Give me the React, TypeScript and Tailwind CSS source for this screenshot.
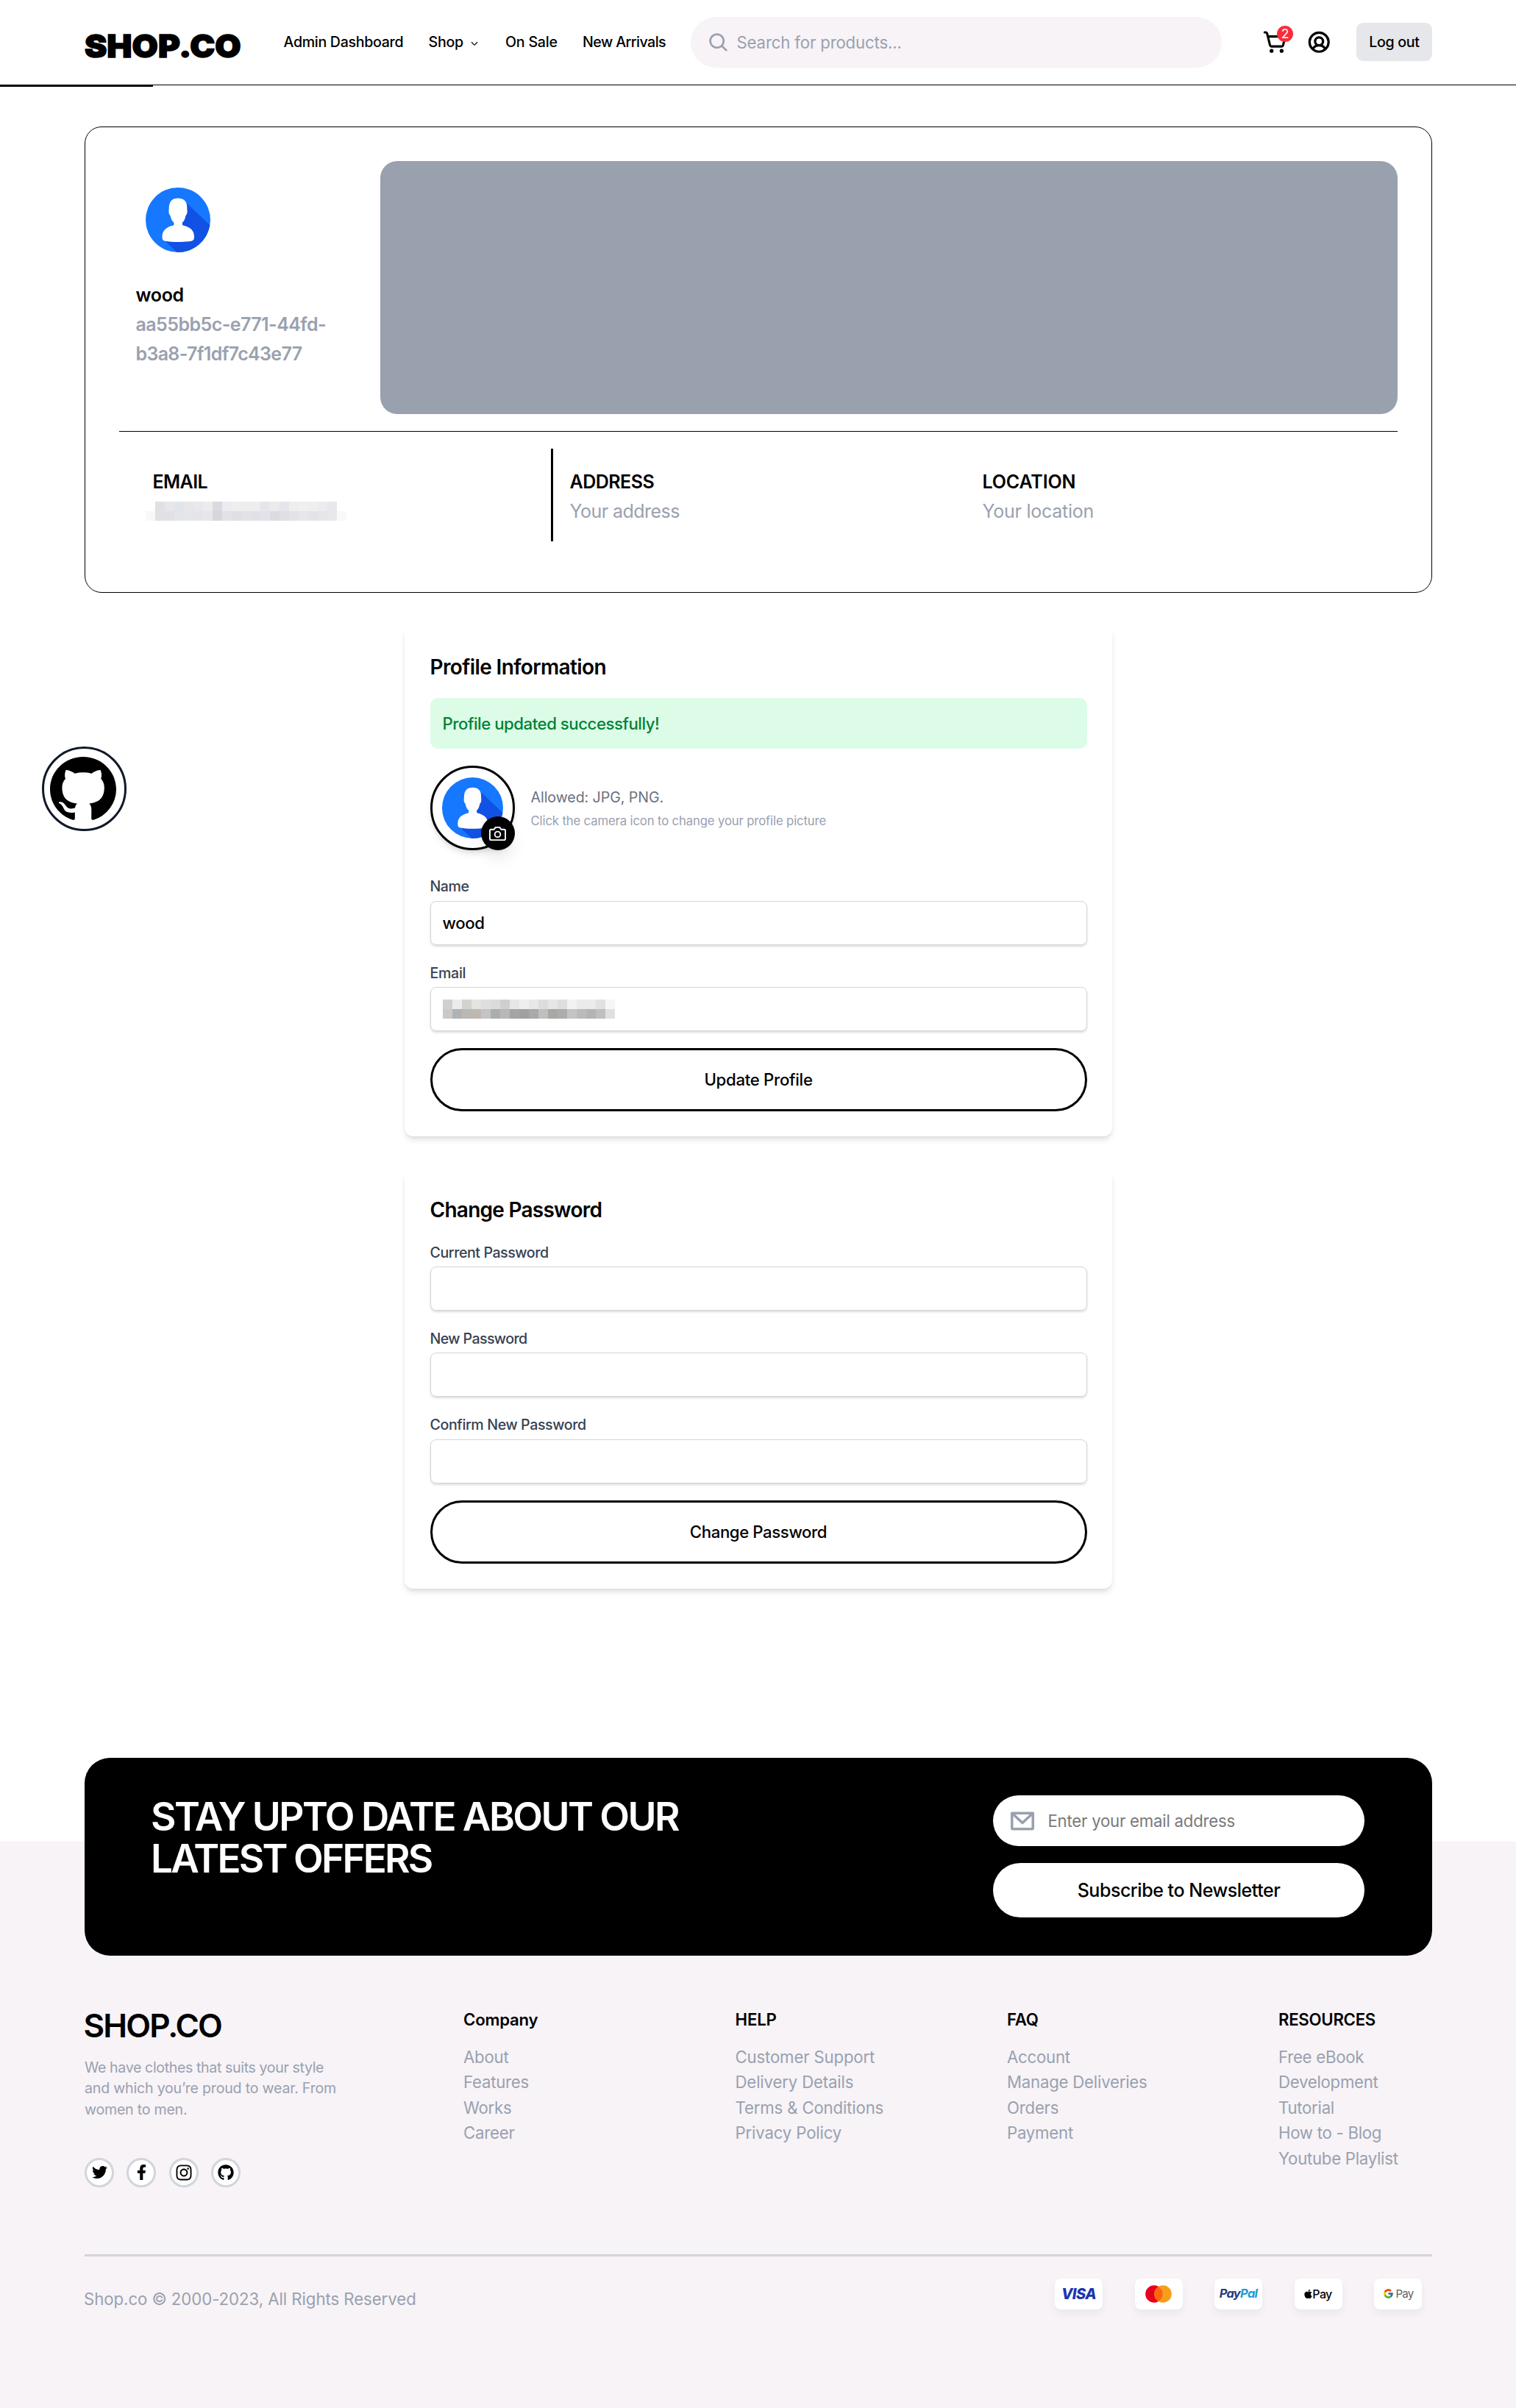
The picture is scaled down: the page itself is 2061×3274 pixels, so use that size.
import React from 'react';
import {
  PiCaretDownBold,
  PiEnvelopeSimpleBold,
  PiMagnifyingGlassBold,
  PiUserCircleBold,
} from 'react-icons/pi';
import { FaApple, FaFacebookF, FaGithub, FaInstagram, FaTwitter } from 'react-icons/fa';
import { FiCamera } from 'react-icons/fi';
import { FcGoogle } from 'react-icons/fc';

function Octocat({ className }: { className: string }) {
  return (
    <svg viewBox="0 0 16 16" className={className} preserveAspectRatio="none" fill="#000">
      <path d="M8 0C3.58 0 0 3.58 0 8c0 3.54 2.29 6.53 5.47 7.59.4.07.55-.17.55-.38 0-.19-.01-.82-.01-1.49-2.01.37-2.53-.49-2.69-.94-.09-.23-.48-.94-.82-1.13-.28-.15-.68-.52-.01-.53.63-.01 1.08.58 1.23.82.72 1.21 1.87.87 2.33.66.07-.52.28-.87.51-1.07-1.78-.2-3.64-.89-3.64-3.95 0-.87.31-1.59.82-2.15-.08-.2-.36-1.02.08-2.12 0 0 .67-.21 2.2.82.64-.18 1.32-.27 2-.27.68 0 1.36.09 2 .27 1.53-1.04 2.2-.82 2.2-.82.44 1.1.16 1.92.08 2.12.51.56.82 1.27.82 2.15 0 3.07-1.87 3.75-3.65 3.95.29.25.54.73.54 1.48 0 1.07-.01 1.93-.01 2.2 0 .21.15.46.55.38A8.013 8.013 0 0016 8c0-4.42-3.58-8-8-8z" />
    </svg>
  );
}

function Cart({ className }: { className: string }) {
  return (
    <svg viewBox="17 15.25 34.5 34.5" className={className} fill="none" stroke="#000" strokeWidth="3.1" strokeLinecap="round" strokeLinejoin="round">
      <path d="M19.300 19.300h1.600q1.300 0 1.700 1.400l3.900 15.800q.5 1.900 2.300 1.900h13.400q1.900 0 2.300-1.900L47 24.900H24" />
      <circle cx="28.700" cy="44.400" r="2.600" fill="#000" stroke="none" />
      <circle cx="42.400" cy="44.400" r="2.600" fill="#000" stroke="none" />
    </svg>
  );
}

function Avatar({ className }: { className: string }) {
  return (
    <svg viewBox="0 0 88 88" className={className}>
      <circle cx="44" cy="44" r="44" fill="#1677ff" />
      <path d="M56 21.500 L87.300 51 A44 44 0 0 1 44 88 L42.500 88 L26 72 L44 60 Z" fill="#1151e4" />
      <path
        d="M44 14.500C52 14.500 57 19 56.300 29C57 33 56.500 36.500 54.500 38C53.500 43 52 46 50 47.500C49.800 50 50 51 51 51.500C60 53.500 66 58 66 67C66 70.500 65 72 62 72.700C52 74.500 36 74.500 26.500 72.700C23.500 72 22.500 70.500 22.500 67C22.500 58 28.500 53.500 37.500 51.500C38.500 51 38.600 50 38.400 47.500C36 46 34.500 43 33.500 38C31.500 36.500 31 33 31.700 29C31.500 19 36 14.500 44 14.500Z"
        fill="#fff"
      />
    </svg>
  );
}

function Mosaic({ rows }: { rows: string[][] }) {
  return (
    <div className="w-max">
      {rows.map((row, r) => (
        <div key={r} className="flex">
          {row.map((color, i) => (
            <span key={i} className="h-[13px] w-[13px]" style={{ backgroundColor: '#' + color }} />
          ))}
        </div>
      ))}
    </div>
  );
}

const profileEmailCells = [
  ['ffffff', 'e0e0e5', 'e7e7e9', 'e1e5ea', 'e7e7ea', 'e9e9ed', 'ececec', 'dadae0', 'ebebf0', 'eeeeef', 'ededee', 'ededee', 'e5e5ea', 'ebebed', 'e5e5eb', 'eeeef0', 'f0f0f0', 'efeff0', 'ececef', 'e8e8ec', 'ffffff'],
  ['f8f8f8', 'e0e0e6', 'e1e1e3', 'e4e5e8', 'e4e6ea', 'e4e4ea', 'e6e7e8', 'd6d6dc', 'e2e2e8', 'e0e0e3', 'e2e3e6', 'e2e2e6', 'e2e2ea', 'dcdce0', 'e0e0e4', 'e3e3e8', 'e7e7ea', 'e3e4e8', 'e6e6e9', 'e8e8eb', 'f9f9fc'],
];

const formEmailCells = [
  ['d0d0d2', 'ececed', 'd2d2cf', 'e4e4e2', 'dfdfdf', 'dadbdb', 'cfcfd2', 'e6e6e7', 'eeeeee', 'e7e7e7', 'dddde0', 'e6e6e6', 'dfdddd', 'f0f2f3', 'eaeaea', 'ebebeb', 'e1e1e0', 'f6f6f6'],
  ['cbc8c6', 'b0b3b6', 'b9b8b4', 'beb8b0', 'c4c4c4', 'abaead', 'b9b8b8', 'a6a5a6', 'a0a0a0', 'a9a9a9', 'c0bfbb', 'a8a8a7', 'adadad', 'c3c5c4', 'bdbbba', 'b2b4b7', 'c0c0c0', 'e1dfdf'],
];

function Header() {
  return (
    <header className="relative flex h-[116px] items-center border-b border-black pr-[114px] pl-[115px]">
      <div className="w-[270.5px] pt-[11px]">
        <span className="block origin-left scale-x-[1.06] text-[43px] leading-none font-black whitespace-nowrap [-webkit-text-stroke:1.5px_black]">
          SHOP.CO
        </span>
      </div>
      <nav className="flex pt-px text-[19.6px] font-medium whitespace-nowrap">
        <a className="w-[197px] tracking-[-0.0156em]">Admin Dashboard</a>
        <a className="flex w-[104.5px] items-center gap-[9px] tracking-[-0.0132em]">
          Shop
          <PiCaretDownBold className="mt-[2px] h-[12px] w-[12px]" />
        </a>
        <a className="w-[105px] tracking-[-0.0106em]">On Sale</a>
        <a className="w-[147px] tracking-[-0.0285em]">New Arrivals</a>
      </nav>
      <div className="flex h-[69px] w-[722px] items-center rounded-full bg-[#f7f3f7] pl-[22.5px] text-[22.2px] tracking-[-0.0067em] text-[#99a1af]">
        <PiMagnifyingGlassBold className="mr-[11px] h-[29px] w-[29px]" />
        Search for products...
      </div>
      <div className="relative ml-[56px]">
        <Cart className="h-[34.5px] w-[34.5px]" />
        <span className="absolute top-[-5px] left-[19px] flex h-[22px] w-[22px] items-center justify-center rounded-full bg-[#fb2c36] text-[17.5px] leading-none text-white">
          2
        </span>
      </div>
      <PiUserCircleBold className="ml-[24px] h-[34.5px] w-[34.5px]" />
      <button className="ml-auto h-[52px] w-[103px] rounded-[9px] bg-[#e5e7eb] pt-px text-[19.6px] font-medium tracking-[-0.0162em]">
        Log out
      </button>
      <div className="absolute top-[115px] left-0 h-[3px] w-[208px] bg-black" />
    </header>
  );
}

function ProfileCard() {
  return (
    <section className="mt-[56px] mr-[114px] ml-[115px] h-[634px] rounded-[23px] border border-black px-[46px] pt-[46px]">
      <div className="flex h-[344px]">
        <div className="w-[355px] pl-[22.5px]">
          <Avatar className="mt-[36px] ml-[13.5px] h-[88px] w-[88px]" />
          <div className="mt-[38px] text-[25px] leading-[40.25px] font-semibold whitespace-nowrap">
            <p className="tracking-[-0.014em]">wood</p>
            <p className="tracking-[-0.0225em] text-[#99a1af]">aa55bb5c-e771-44fd-</p>
            <p className="tracking-[-0.0265em] text-[#99a1af]">b3a8-7f1df7c43e77</p>
          </div>
        </div>
        <div className="flex-1 rounded-[23px] bg-[#99a1af]" />
      </div>
      <div className="mt-[23px] h-px bg-black" />
      <div className="mt-[23px] flex h-[126px] text-[25px] leading-[40.25px]">
        <div className="w-[590px] border-r-[3px] border-black pt-[25px] pl-[45.5px]">
          <p className="font-semibold tracking-[-0.0231em]">EMAIL</p>
          <div className="mt-[7px] ml-[-9.5px]">
            <Mosaic rows={profileEmailCells} />
          </div>
        </div>
        <div className="w-[561px] pt-[25px] pl-[22.5px]">
          <p className="font-semibold tracking-[-0.020em]">ADDRESS</p>
          <p className="tracking-[-0.0215em] text-[#99a1af]">Your address</p>
        </div>
        <div className="pt-[25px] pl-[22.5px]">
          <p className="font-semibold tracking-[-0.0062em]">LOCATION</p>
          <p className="tracking-[-0.0103em] text-[#99a1af]">Your location</p>
        </div>
      </div>
    </section>
  );
}

function Field({ label, spacing, children }: { label: string; spacing: string; children?: React.ReactNode }) {
  return (
    <div className="mb-[23px]">
      <p className={'text-[19.6px] leading-[30.75px] font-medium text-[#364153] ' + spacing}>{label}</p>
      <div className="mt-[3.5px] flex h-[60px] items-center rounded-[8px] border-[1.5px] border-[#d1d5dc] px-[16px] text-[22.2px] font-medium tracking-[-0.015em] shadow-[0_2px_3px_rgba(0,0,0,0.14)]">
        {children}
      </div>
    </div>
  );
}

const cardClass =
  'ml-[550px] w-[962px] rounded-[12px] bg-white p-[34.5px] shadow-[0_6px_9px_-1px_rgba(0,0,0,0.1),0_3px_6px_-3px_rgba(0,0,0,0.1)]';
const outlineButton =
  'h-[86px] w-full rounded-full border-[3px] border-black text-[22.2px] font-medium';

function ProfileForm() {
  return (
    <section className={cardClass + ' mt-[46px]'}>
      <h2 className="pt-[0.5px] text-[28px] leading-[40px] font-semibold tracking-[-0.0218em]">Profile Information</h2>
      <div className="mt-[22.5px] flex h-[69px] items-center rounded-[11px] bg-[#dcfce7] px-[17px] text-[22.2px] font-medium tracking-[-0.0209em] text-[#008236]">
        Profile updated successfully!
      </div>
      <div className="mt-[23px] mb-[34px] flex items-center">
        <div className="relative flex h-[115px] w-[115px] items-center justify-center rounded-full border-[3px] border-black shadow-[0_6px_9px_-1px_rgba(0,0,0,0.1),0_3px_6px_-3px_rgba(0,0,0,0.1)]">
          <Avatar className="h-[83px] w-[83px]" />
          <span className="absolute right-[-3px] bottom-[-3px] flex h-[46px] w-[46px] items-center justify-center rounded-full bg-black text-white shadow-[0_14px_21px_-4px_rgba(0,0,0,0.1),0_6px_9px_-6px_rgba(0,0,0,0.1)]">
            <FiCamera className="h-[23px] w-[23px]" />
          </span>
        </div>
        <div className="ml-[22px] pt-[2px]">
          <p className="text-[19.6px] leading-[28.75px] tracking-[-0.0031em] text-[#6a7282]">Allowed: JPG, PNG.</p>
          <p className="mt-[3px] text-[16.7px] leading-[28px] tracking-[-0.0077em] text-[#99a1af]">
            Click the camera icon to change your profile picture
          </p>
        </div>
      </div>
      <Field label="Name" spacing="tracking-[-0.0229em]">
        wood
      </Field>
      <Field label="Email" spacing="tracking-[-0.0164em]">
        <Mosaic rows={formEmailCells} />
      </Field>
      <button className={outlineButton + ' tracking-[-0.0128em]'}>Update Profile</button>
    </section>
  );
}

function PasswordForm() {
  return (
    <section className={cardClass + ' mt-[45.5px]'}>
      <h2 className="mb-[22.5px] text-[28px] leading-[40px] font-semibold tracking-[-0.0265em]">Change Password</h2>
      <Field label="Current Password" spacing="tracking-[-0.0223em]" />
      <Field label="New Password" spacing="tracking-[-0.0308em]" />
      <Field label="Confirm New Password" spacing="tracking-[-0.0202em]" />
      <button className={outlineButton + ' tracking-[-0.0176em]'}>Change Password</button>
    </section>
  );
}

const linkColumns = [
  { title: 'Company', links: ['About', 'Features', 'Works', 'Career'], cls: 'w-[369.5px] tracking-[-0.010em]' },
  { title: 'HELP', links: ['Customer Support', 'Delivery Details', 'Terms & Conditions', 'Privacy Policy'], cls: 'w-[369.5px] tracking-[-0.007em]' },
  { title: 'FAQ', links: ['Account', 'Manage Deliveries', 'Orders', 'Payment'], cls: 'w-[369px] tracking-[-0.0099em]' },
  { title: 'RESOURCES', links: ['Free eBook', 'Development', 'Tutorial', 'How to - Blog', 'Youtube Playlist'], cls: 'tracking-[-0.012em]' },
];

const badge =
  'flex h-[42px] w-[65px] items-center justify-center rounded-[8px] bg-white shadow-[0_6px_12px_rgba(0,0,0,0.05)]';
const social =
  'flex h-[40px] w-[40px] items-center justify-center rounded-full border-[3px] border-[#d1d5dc] bg-white';

function Footer() {
  return (
    <footer className="mt-[344px] flex h-[770px] flex-col bg-[#f7f3f7] pr-[114px] pl-[115px]">
      <div className="mt-[-114.5px] flex h-[269.5px] shrink-0 justify-between rounded-[34.5px] bg-black pt-[51.5px] pr-[92px] pl-[90px]">
        <h2 className="pt-[0.5px] text-[53px] leading-[57.5px] font-semibold whitespace-nowrap text-white">
          <span className="block tracking-[-0.0475em]">STAY UPTO DATE ABOUT OUR</span>
          <span className="block tracking-[-0.053em]">LATEST OFFERS</span>
        </h2>
        <div className="w-[505px]">
          <div className="flex h-[69px] items-center rounded-full bg-white pl-[21px] text-[22.2px] tracking-[-0.0101em] text-[#7a7a7a]">
            <PiEnvelopeSimpleBold className="mr-[15.5px] h-[38px] w-[38px] text-[#99a1af]" />
            Enter your email address
          </div>
          <button className="mt-[23px] h-[74px] w-full rounded-full bg-white pt-[1px] text-[25px] font-medium tracking-[-0.0187em]">
            Subscribe to Newsletter
          </button>
        </div>
      </div>
      <div className="mt-[69.5px] flex h-[336.5px] shrink-0 whitespace-nowrap">
        <div className="w-[515px]">
          <p className="ml-[-1.5px] text-[44px] leading-[50px] font-semibold tracking-[-0.042em]">SHOP.CO</p>
          <div className="mt-[18px] text-[19.6px] leading-[28.75px] text-[#99a1af]">
            <p className="tracking-[-0.0192em]">We have clothes that suits your style</p>
            <p className="tracking-[-0.0108em]">and which you’re proud to wear. From</p>
            <p className="tracking-[-0.012em]">women to men.</p>
          </div>
          <div className="mt-[51px] flex gap-[17.25px]">
            <span className={social}>
              <FaTwitter className="h-[21px] w-[21px]" />
            </span>
            <span className={social}>
              <FaFacebookF className="h-[21px] w-[21px]" />
            </span>
            <span className={social}>
              <FaInstagram className="h-[24px] w-[24px]" />
            </span>
            <span className={social}>
              <FaGithub className="h-[22px] w-[22px]" />
            </span>
          </div>
        </div>
        {linkColumns.map((col) => (
          <div key={col.title} className={'text-[22.2px] leading-[34.5px] ' + col.cls}>
            <p className="mb-[16.5px] font-semibold">{col.title}</p>
            {col.links.map((link) => (
              <p key={link} className="text-[#99a1af]">
                {link}
              </p>
            ))}
          </div>
        ))}
      </div>
      <div className="h-[3px] shrink-0 bg-[#d1d5dc]" />
      <div className="mt-[29.5px] flex justify-between pr-[14px]">
        <p className="mt-[11px] ml-[-1px] text-[22.2px] leading-[34.5px] tracking-[-0.0023em] text-[#99a1af]">
          Shop.co © 2000-2023, All Rights Reserved
        </p>
        <div className="flex gap-[43.5px]">
          <span className={badge}>
            <span className="text-[20px] leading-none font-extrabold tracking-[-0.03em] text-[#1a34b0] italic">VISA</span>
          </span>
          <span className={badge}>
            <svg viewBox="0 0 36 24" className="h-[24px] w-[36px]">
              <circle cx="12" cy="12" r="11.8" fill="#e6001c" />
              <circle cx="24" cy="12" r="11.8" fill="#f69e1c" />
              <path d="M18 1.900a11.800 11.800 0 0 1 0 20.200a11.800 11.800 0 0 1 0-20.200z" fill="#fb6410" />
            </svg>
          </span>
          <span className={badge}>
            <span className="text-[16.5px] leading-none font-bold tracking-[-0.045em] text-[#253b80] italic">
              Pay<span className="text-[#179bd7]">Pal</span>
            </span>
          </span>
          <span className={badge}>
            <FaApple className="h-[14px] w-[11px]" />
            <span className="text-[16px] leading-none font-medium tracking-[-0.04em]">Pay</span>
          </span>
          <span className={badge}>
            <FcGoogle className="mr-[3px] h-[15px] w-[15px]" />
            <span className="text-[15px] leading-none tracking-[-0.05em] text-[#5f6368]">Pay</span>
          </span>
        </div>
      </div>
    </footer>
  );
}

export default function App() {
  return (
    <div className="relative flex h-[3274px] w-[2061px] flex-col overflow-hidden bg-white font-['Inter',sans-serif] text-black">
      <Header />
      <ProfileCard />
      <ProfileForm />
      <PasswordForm />
      <Footer />
      <a className="absolute top-[1015px] left-[57px] flex h-[115px] w-[115px] items-center justify-center rounded-full border-[3px] border-[#101828] bg-white pr-[4px]">
        <Octocat className="h-[88px] w-[90px]" />
      </a>
    </div>
  );
}
